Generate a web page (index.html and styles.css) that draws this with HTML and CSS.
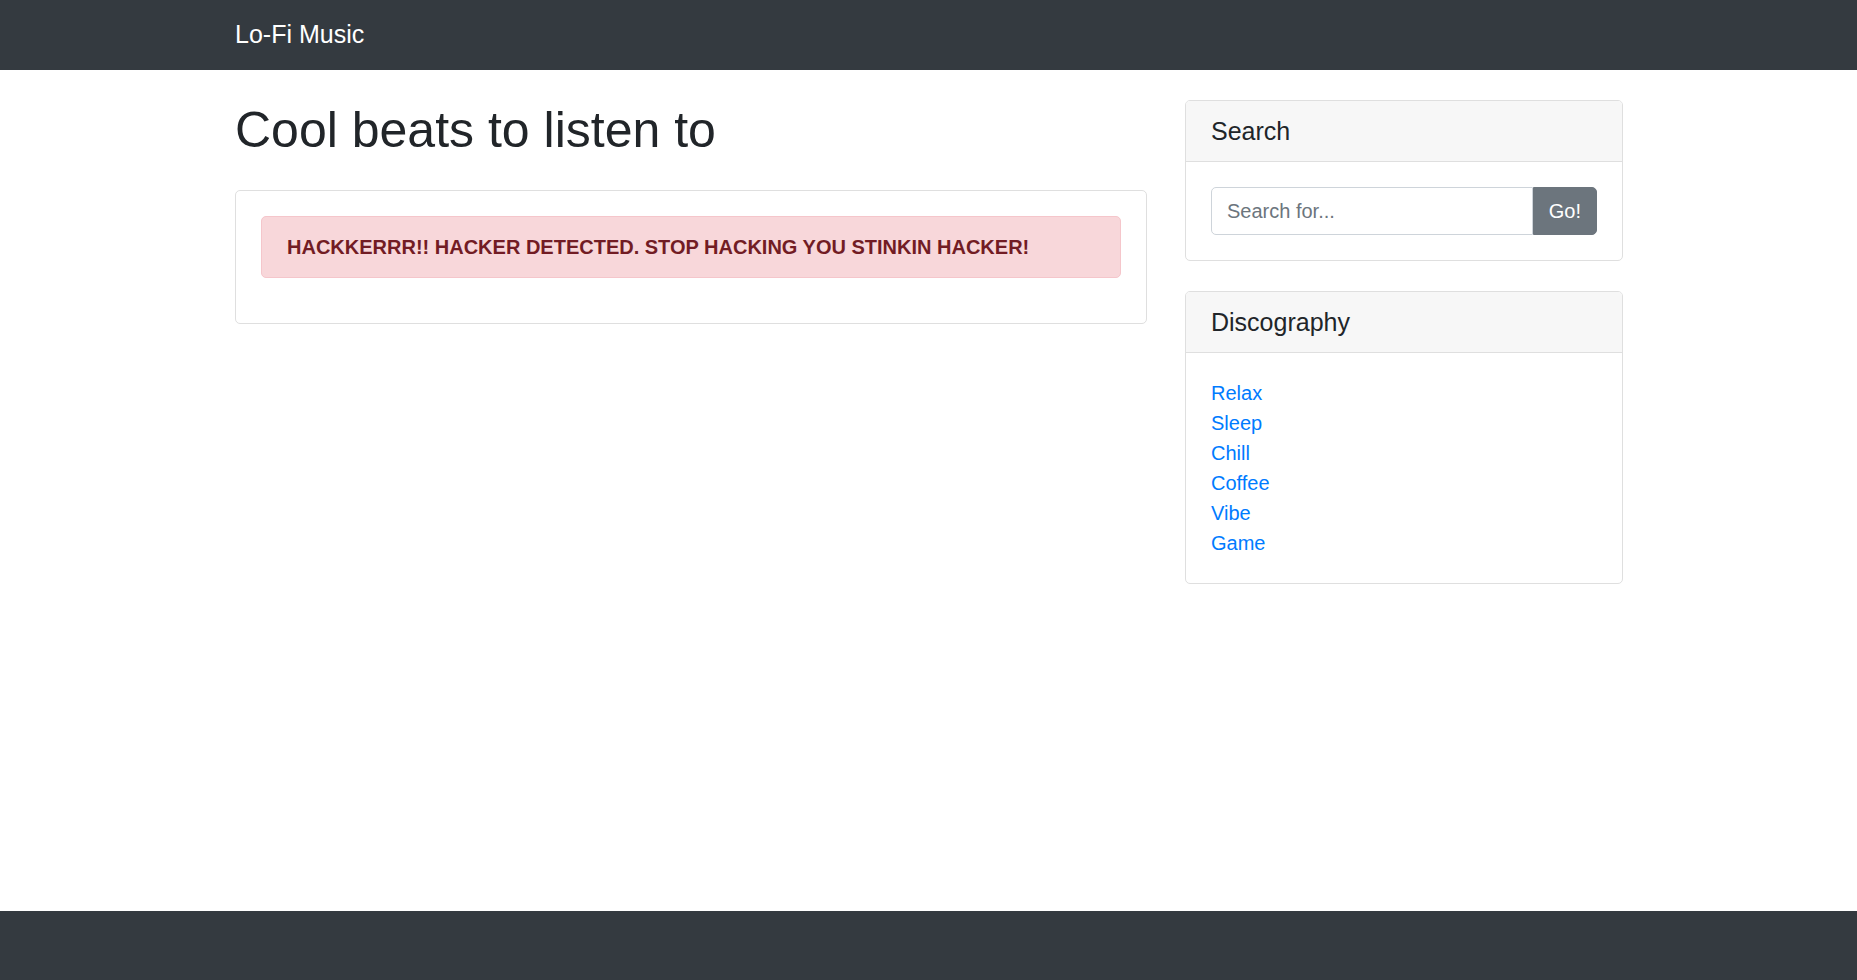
FILE: index.html
```html
<!DOCTYPE html>
<html lang="en">
<head>
<meta charset="utf-8">
<title>Lo-Fi Music</title>
<link rel="stylesheet" href="styles.css">
</head>
<body>
<nav class="navbar">
  <div class="container">
    <a class="brand" href="#">Lo-Fi Music</a>
  </div>
</nav>
<main class="main">
  <div class="container row">
    <div class="col-main">
      <h1 class="title">Cool beats to listen to</h1>
      <div class="card">
        <div class="card-body">
          <div class="alert"><b>HACKKERRR!! HACKER DETECTED. STOP HACKING YOU STINKIN HACKER!</b></div>
        </div>
      </div>
    </div>
    <aside class="col-side">
      <div class="card">
        <h5 class="card-header">Search</h5>
        <div class="card-body">
          <div class="input-group">
            <input class="form-control" type="text" placeholder="Search for...">
            <button class="btn" type="button">Go!</button>
          </div>
        </div>
      </div>
      <div class="card card-gap">
        <h5 class="card-header">Discography</h5>
        <div class="card-body">
          <ul class="list">
            <li><a href="#">Relax</a></li>
            <li><a href="#">Sleep</a></li>
            <li><a href="#">Chill</a></li>
            <li><a href="#">Coffee</a></li>
            <li><a href="#">Vibe</a></li>
            <li><a href="#">Game</a></li>
          </ul>
        </div>
      </div>
    </aside>
  </div>
</main>
<footer class="footer"></footer>
</body>
</html>
```

FILE: styles.css
```css
* { box-sizing: border-box; }
html, body { margin: 0; padding: 0; }
body {
  font-family: "Liberation Sans", Arial, sans-serif;
  font-size: 20px;
  line-height: 30px;
  color: #212529;
  background: #fff;
  min-height: 100vh;
  display: flex;
  flex-direction: column;
}
a { color: #007bff; text-decoration: none; }

.container {
  width: 1388px;
  margin-left: calc(50% - 693.5px);
}

.navbar {
  background: #343a40;
  height: 70px;
  padding: 10px 0;
}
.brand {
  display: inline-block;
  color: #fff;
  font-size: 25px;
  line-height: 37.5px;
  padding: 6.25px 0;
}

.main { flex: 1; }
.row {
  display: grid;
  grid-template-columns: 912px 438px;
  column-gap: 38px;
  align-items: start;
}

.title {
  margin: 30px 0 30px;
  font-size: 50px;
  line-height: 60px;
  font-weight: 500;
}

.card {
  border: 1px solid #dfdfdf;
  border-radius: 5px;
  background: #fff;
}
.col-side { padding-top: 30px; }
.card-gap { margin-top: 30px; }
.card-header {
  margin: 0;
  padding: 15px 25px;
  font-size: 25px;
  line-height: 30px;
  font-weight: 500;
  background: #f7f7f7;
  border-bottom: 1px solid #dfdfdf;
  border-radius: 4px 4px 0 0;
}
.card-body { padding: 25px; }

.alert {
  padding: 15px 25px;
  margin-bottom: 20px;
  border: 1px solid #f5c6cb;
  border-radius: 5px;
  background: #f8d7da;
  color: #721c24;
}
.alert b { font-weight: 700; }

.input-group { display: flex; }
.form-control {
  flex: 1;
  min-width: 0;
  height: 48px;
  padding: 7.5px 15px;
  font-family: inherit;
  font-size: 20px;
  line-height: 30px;
  color: #495057;
  border: 1px solid #ced4da;
  border-radius: 5px 0 0 5px;
  background: #fff;
}
.form-control::placeholder { color: #6c757d; }
.btn {
  height: 48px;
  padding: 7.5px 15px;
  font-family: inherit;
  font-size: 20px;
  line-height: 30px;
  color: #fff;
  background: #6c757d;
  border: 1px solid #6c757d;
  border-radius: 0 5px 5px 0;
}

.list {
  list-style: none;
  margin: 0;
  padding: 0;
}

.footer {
  background: #343a40;
  height: 69px;
}
```
